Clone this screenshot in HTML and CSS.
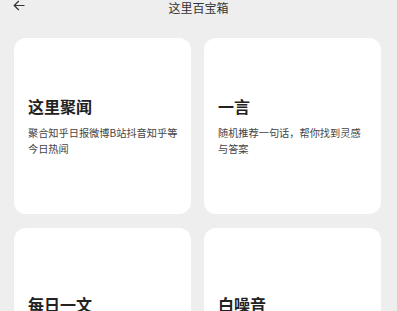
FILE: index.html
```html
<!DOCTYPE html>
<html lang="zh-CN">
<head>
    <meta charset="UTF-8">
    <meta name="viewport" content="width=device-width, initial-scale=1.0">
    <title>这里百宝箱</title>
    <link rel="stylesheet" href="styles.css">
</head>
<body>
    <div class="topbar">
        <span class="back">
            <svg width="12" height="11" viewBox="0 0 12 11">
                <path d="M11.5 5.5H1.2M5.8 1L1.2 5.5L5.8 10" fill="none" stroke="#333" stroke-width="1.2"/>
            </svg>
        </span>
        <span class="page-title">这里百宝箱</span>
    </div>

    <div class="grid">
        <div class="card">
            <h2>这里聚闻</h2>
            <p>聚合知乎日报微博B站抖音知乎等今日热闻</p>
        </div>
        <div class="card">
            <h2>一言</h2>
            <p>随机推荐一句话，帮你找到灵感与答案</p>
        </div>
        <div class="card">
            <h2>每日一文</h2>
            <p>每天一篇精选短文，慢慢读</p>
        </div>
        <div class="card">
            <h2>白噪音</h2>
            <p>雨声、海浪、篝火，专注与放松</p>
        </div>
    </div>
</body>
</html>
```

FILE: styles.css
```css
body {
    margin: 0;
    background-color: #eeeeee;
    font-family: "Noto Sans CJK SC", "Noto Sans", sans-serif;
    color: #222;
}
.topbar {
    position: relative;
    height: 16px;
    display: flex;
    justify-content: center;
}
.back {
    position: absolute;
    left: 13px;
    top: 0;
    line-height: 0;
}
.page-title {
    font-size: 12px;
    line-height: 16px;
    color: #333;
}
.grid {
    display: grid;
    grid-template-columns: 1fr 1fr;
    gap: 14px 13px;
    padding: 22px 16px 0 14px;
}
.card {
    background: white;
    border-radius: 12px;
    height: 176px;
    padding: 0 11px 0 14px;
    box-sizing: border-box;
    display: flex;
    flex-direction: column;
    justify-content: center;
}
.card h2 {
    margin: 0;
    font-size: 16px;
    line-height: 22px;
    font-weight: bold;
    color: #222;
}
.card p {
    margin: 8px 0 0;
    font-size: 10.2px;
    line-height: 16px;
    color: #444;
}
```
